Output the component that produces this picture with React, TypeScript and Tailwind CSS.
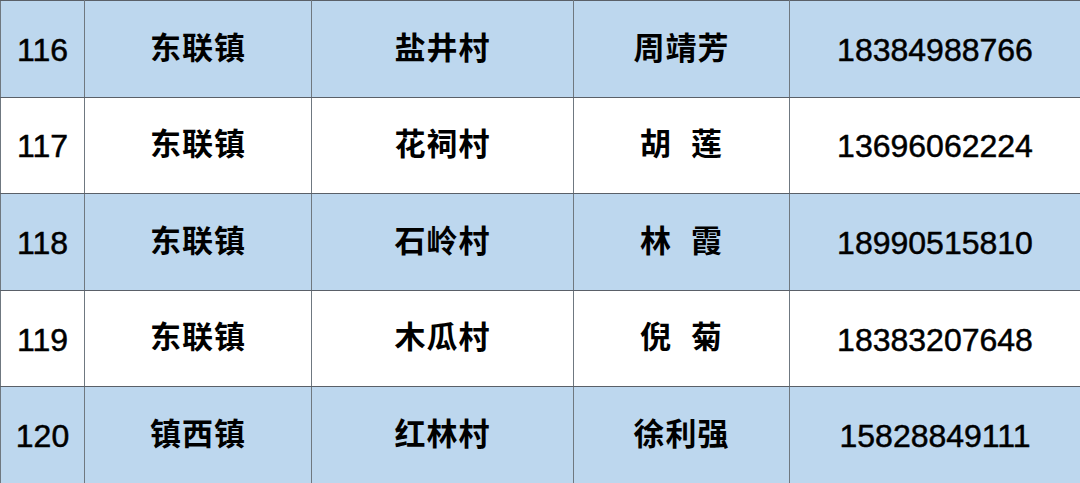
import React from 'react';

type Row = { no: string; town: string; village: string; name: string; phone: string };

const rows: Row[] = [
  { no: '116', town: '东联镇', village: '盐井村', name: '周靖芳', phone: '18384988766' },
  { no: '117', town: '东联镇', village: '花祠村', name: '胡 莲', phone: '13696062224' },
  { no: '118', town: '东联镇', village: '石岭村', name: '林 霞', phone: '18990515810' },
  { no: '119', town: '东联镇', village: '木瓜村', name: '倪 菊', phone: '18383207648' },
  { no: '120', town: '镇西镇', village: '红林村', name: '徐利强', phone: '15828849111' },
];

const cjk = "font-['Liberation_Sans','Noto_Sans_CJK_SC',sans-serif]";
const cell = 'border-[1.5px] border-x-[#6f7880] border-y-[#5a6068] text-center';
const num = `${cell} text-[32px] pt-[2px] [-webkit-text-stroke:0.5px_black]`;
const han = `${cell} text-[31px] font-bold tracking-[1px]`;

export default function App() {
  return (
    <div className="w-[1080px] h-[483px] overflow-hidden bg-white">
      <table className={`w-[1080px] border-collapse table-fixed text-black ${cjk}`}>
        <colgroup>
          <col className="w-[84px]" />
          <col className="w-[227px]" />
          <col className="w-[262px]" />
          <col className="w-[216px]" />
          <col className="w-[291px]" />
        </colgroup>
        <tbody>
          {rows.map((r, i) => (
            <tr
              key={r.no}
              className={`h-[96.6px] ${i % 2 === 0 ? 'bg-[#bdd7ee]' : 'bg-white'}`}
            >
              <td className={num}>{r.no}</td>
              <td className={han}>{r.town}</td>
              <td className={han}>{r.village}</td>
              <td className={`${han} whitespace-pre`}>{r.name.replace(' ', '  ')}</td>
              <td className={num}>{r.phone}</td>
            </tr>
          ))}
        </tbody>
      </table>
    </div>
  );
}
